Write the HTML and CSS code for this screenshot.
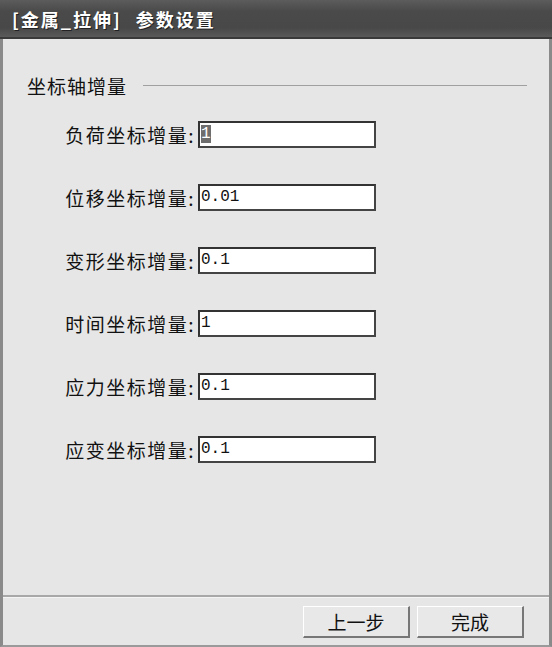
FILE: index.html
```html
<!DOCTYPE html>
<html>
<head>
    <title>参数设置</title>
    <link rel="stylesheet" href="styles.css">
</head>
<body>
<div class="dialog">
    <div class="title-bar">[金属_拉伸]<span class="title-main">参数设置</span></div>
    <div class="dialog-body">
        <div class="group-header">
            <span class="group-title">坐标轴增量</span>
            <span class="group-line"></span>
        </div>
        <div class="field-list">
            <div class="field-row">
                <label>负荷坐标增量:</label>
                <div class="text-input"><span class="selected">1</span></div>
            </div>
            <div class="field-row">
                <label>位移坐标增量:</label>
                <div class="text-input">0.01</div>
            </div>
            <div class="field-row">
                <label>变形坐标增量:</label>
                <div class="text-input">0.1</div>
            </div>
            <div class="field-row">
                <label>时间坐标增量:</label>
                <div class="text-input">1</div>
            </div>
            <div class="field-row">
                <label>应力坐标增量:</label>
                <div class="text-input">0.1</div>
            </div>
            <div class="field-row">
                <label>应变坐标增量:</label>
                <div class="text-input">0.1</div>
            </div>
        </div>
    </div>
    <div class="button-bar">
        <button class="btn">上一步</button>
        <button class="btn">完成</button>
    </div>
</div>
</body>
</html>
```

FILE: styles.css
```css
html, body {
    margin: 0;
    padding: 0;
}
body {
    width: 552px;
    height: 647px;
    background: #e6e6e6;
    font-family: "Noto Sans CJK SC", "Noto Sans", sans-serif;
    color: #111;
}
.dialog {
    width: 552px;
    height: 647px;
    box-sizing: border-box;
    display: flex;
    flex-direction: column;
    background: #e6e6e6;
    border-left: 3px solid #8a8a8a;
    border-right: 3px solid #8a8a8a;
    border-bottom: 2px solid #9a9a9a;
}
.title-bar {
    height: 39px;
    margin: 0 -3px;
    box-sizing: border-box;
    padding-left: 12px;
    display: flex;
    align-items: center;
    background: linear-gradient(#5c5c5c, #4a4a4a 30%, #484848 75%, #5a5a5a);
    border-bottom: 2px solid #3a3a3a;
    color: #fff;
    font-size: 18px;
    font-weight: bold;
    letter-spacing: 2px;
    text-shadow: 1px 1px 0 #222;
}
.title-main {
    margin-left: 14px;
}
.dialog-body {
    flex: 1;
    border-bottom: 2px solid #a8a8a8;
}
.group-header {
    display: flex;
    align-items: center;
    margin: 34px 22px 0 24px;
    height: 24px;
}
.group-title {
    font-size: 19px;
    letter-spacing: 1px;
}
.group-line {
    flex: 1;
    height: 1px;
    margin-left: 16px;
    background: #a0a0a0;
}
.field-list {
    margin-top: 24px;
    display: flex;
    flex-direction: column;
    gap: 36px;
}
.field-row {
    display: flex;
    align-items: center;
    height: 27px;
}
.field-row label {
    width: 192px;
    text-align: right;
    font-size: 19px;
    letter-spacing: 1.5px;
    margin-right: 3px;
}
.text-input {
    width: 178px;
    height: 27px;
    box-sizing: border-box;
    background: #fff;
    border: 2px solid #333;
    border-right-color: #444;
    border-bottom-color: #444;
    font-family: "Liberation Mono", monospace;
    font-size: 16px;
    line-height: 23px;
    padding-left: 1px;
}
.selected {
    background: #6e6e6e;
    color: #fff;
}
.button-bar {
    height: 47px;
    display: flex;
    justify-content: flex-end;
    align-items: center;
    gap: 7px;
    padding-right: 25px;
    border-top: 1px solid #f4f4f4;
}
.btn {
    width: 107px;
    height: 32px;
    background: #e8e8e8;
    border: 1px solid #fff;
    border-right: 2px solid #777;
    border-bottom: 2px solid #777;
    font-family: "Noto Sans CJK SC", sans-serif;
    font-size: 19px;
    color: #111;
    padding: 0;
}
```
